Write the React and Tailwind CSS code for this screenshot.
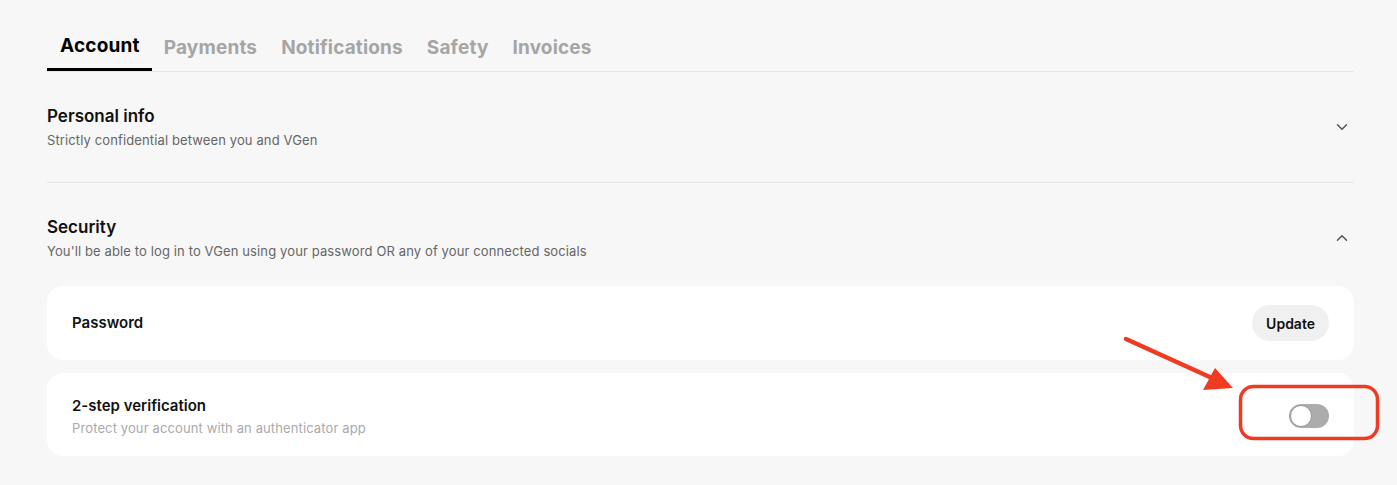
import React, { useState } from 'react';
import { ChevronDown, ChevronUp } from 'lucide-react';

const tabs = ['Account', 'Payments', 'Notifications', 'Safety', 'Invoices'];

const Section = ({ title, subtitle, open, children }) => (
  <div className="pt-[32px]">
    <div className="flex items-center justify-between">
      <div>
        <div className="text-[17px] leading-[24px] font-semibold text-[#111]">{title}</div>
        <div className="text-[13px] leading-[20px] mt-[2px] text-[#666] tracking-[0.12px]">{subtitle}</div>
      </div>
      <div className="pr-[3px] text-[#555]">
        {open ? <ChevronUp size={18} strokeWidth={2} /> : <ChevronDown size={18} strokeWidth={2} />}
      </div>
    </div>
    {children}
  </div>
);

export default function App() {
  const [active] = useState('Account');
  const [enabled, setEnabled] = useState(false);

  return (
    <div
      className="relative w-[1397px] h-[485px] overflow-hidden bg-[#f7f7f7] pl-[47px] pr-[43px] pt-[24px]"
      style={{ fontFamily: 'Inter, "Noto Sans", sans-serif' }}
    >
      {/* tabs */}
      <div className="flex border-b border-[#e6e6e6]">
        {tabs.map((t) => (
          <div
            key={t}
            className={
              t === active
                ? 'h-[47px] pl-[13px] pr-[12px] flex items-center text-[19px] font-bold text-black border-b-[3px] border-black -mb-px pt-[1px] tracking-[0.2px]'
                : 'h-[47px] px-[12px] flex items-center text-[19px] font-bold text-[#a5a5a5] pt-[1px] tracking-[0.15px]'
            }
          >
            {t}
          </div>
        ))}
      </div>

      <div className="pb-[32px] border-b border-[#e6e6e6]">
        <Section title="Personal info" subtitle="Strictly confidential between you and VGen" open={false} />
      </div>

      <Section
        title="Security"
        subtitle="You'll be able to log in to VGen using your password OR any of your connected socials"
        open
      >
        <div className="mt-[25px] flex flex-col gap-[13px]">
          <div className="h-[74px] bg-white rounded-[16px] px-[25px] flex items-center justify-between">
            <div className="text-[15px] font-semibold text-[#111]">Password</div>
            <button className="h-[36px] px-[14px] rounded-full bg-[#f0f0f0] text-[14px] font-semibold text-[#111]">
              Update
            </button>
          </div>
          <div className="h-[83px] bg-white rounded-[16px] px-[25px] pt-[2px] flex items-center justify-between">
            <div>
              <div className="text-[15px] leading-[24px] font-semibold text-[#111]">2-step verification</div>
              <div className="text-[13px] leading-[20px] text-[#aaa] tracking-[0.12px]">Protect your account with an authenticator app</div>
            </div>
            <button
              onClick={() => setEnabled(!enabled)}
              className={
                enabled
                  ? 'w-[40px] h-[24px] rounded-full bg-[#111] flex items-center justify-end p-[1px]'
                  : 'w-[40px] h-[24px] rounded-full bg-[#acacac] flex items-center p-[1px]'
              }
            >
              <span className="w-[22px] h-[22px] rounded-full bg-white border border-[#9a9a9a]" />
            </button>
          </div>
        </div>
      </Section>

      {/* red annotation */}
      <svg className="absolute left-0 top-0 pointer-events-none" width="1397" height="485" viewBox="0 0 1397 485">
        <line x1="1126" y1="339" x2="1212" y2="378" stroke="#f03a22" strokeWidth="4.5" strokeLinecap="round" />
        <polygon points="1233,388 1203,390 1215,368" fill="#f03a22" />
        <rect x="1240.5" y="386.5" width="137" height="52" rx="13" fill="none" stroke="#f03a22" strokeWidth="3.5" />
      </svg>
    </div>
  );
}
